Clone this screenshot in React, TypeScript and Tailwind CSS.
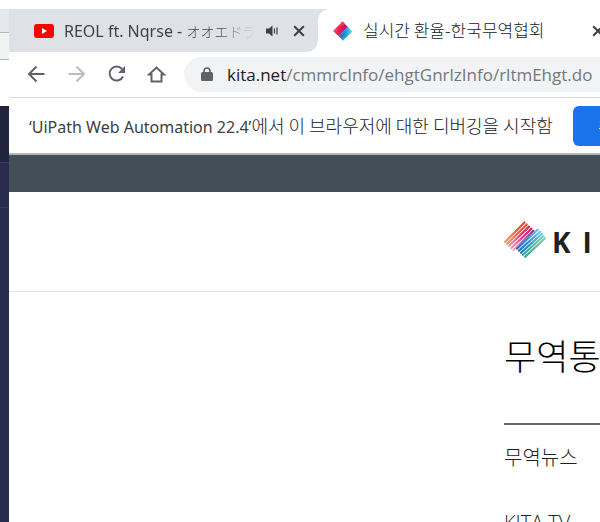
import React from "react";

const LATIN_FONT = "font-['Noto_Sans','Noto_Sans_CJK_KR',sans-serif]";
const KOREAN_FONT = "font-['Noto_Sans_CJK_KR',sans-serif]";

function CloseIcon() {
  return (
    <svg width="12" height="12" viewBox="0 0 12 12" fill="none" stroke="#3c4043" strokeWidth="2" aria-hidden="true">
      <path d="M1.200 1.200l9.600 9.600M10.800 1.200l-9.600 9.600" />
    </svg>
  );
}

function YouTubeIcon() {
  return (
    <svg width="20" height="14" viewBox="0 0 20 14" className="shrink-0" aria-hidden="true">
      <rect width="20" height="14" rx="3" fill="#f00" />
      <path d="M8 4l5 3-5 3z" fill="#fff" />
    </svg>
  );
}

function SpeakerIcon() {
  return (
    <svg width="13" height="12" viewBox="0 0 13 12" className="shrink-0" aria-hidden="true">
      <path d="M0 3.500h3L6.500 0.500v11L3 8.500H0z" fill="#3c4043" />
      <path d="M8.500 3.500v5M11 2.500v7" stroke="#3c4043" strokeWidth="1.200" />
    </svg>
  );
}

function KitaFavicon() {
  return (
    <svg width="20" height="20" viewBox="0 0 20 20" className="shrink-0" aria-hidden="true">
      <defs>
        <linearGradient id="favWarm" x1="0" y1="0" x2="1" y2="0.3">
          <stop offset="0" stopColor="#f07a80" />
          <stop offset="0.5" stopColor="#f51d55" />
          <stop offset="1" stopColor="#a5148f" />
        </linearGradient>
        <linearGradient id="favCool" x1="0" y1="0" x2="1" y2="0">
          <stop offset="0" stopColor="#3556bd" />
          <stop offset="0.5" stopColor="#129ed3" />
          <stop offset="1" stopColor="#76dce5" />
        </linearGradient>
      </defs>
      <path d="M0 10l9.500-9.500 5.500 5.500-9.500 9z" fill="url(#favWarm)" />
      <path d="M5.500 15L15 6l4.500 4.500L10 19.500z" fill="url(#favCool)" />
      <path d="M5 6L9.500.500 12 3z" fill="#f0452d" />
      <path d="M8 17.500L14 14l-4 5.500z" fill="#2bb5a8" />
    </svg>
  );
}

function KitaLogo() {
  return (
    <svg width="42" height="37" viewBox="0 0 42 37" fill="none" strokeWidth="2.200" strokeLinecap="round" className="shrink-0" aria-hidden="true">
      <defs>
        <linearGradient id="warm" gradientUnits="userSpaceOnUse" x1="0" y1="22" x2="22" y2="2">
          <stop offset="0" stopColor="#f5a66c" />
          <stop offset="0.6" stopColor="#ea5a3c" />
          <stop offset="1" stopColor="#e5482f" />
        </linearGradient>
        <linearGradient id="pink" gradientUnits="userSpaceOnUse" x1="3" y1="25" x2="28" y2="7">
          <stop offset="0" stopColor="#f6a4bd" />
          <stop offset="0.6" stopColor="#e3317a" />
          <stop offset="1" stopColor="#d41e5c" />
        </linearGradient>
        <linearGradient id="violet" gradientUnits="userSpaceOnUse" x1="8" y1="28" x2="30" y2="10">
          <stop offset="0" stopColor="#efa5cf" />
          <stop offset="1" stopColor="#922b90" />
        </linearGradient>
        <linearGradient id="blue" gradientUnits="userSpaceOnUse" x1="12" y1="28" x2="37" y2="10">
          <stop offset="0" stopColor="#2466b1" />
          <stop offset="0.5" stopColor="#2a97d8" />
          <stop offset="1" stopColor="#79cdf1" />
        </linearGradient>
        <linearGradient id="green" gradientUnits="userSpaceOnUse" x1="18" y1="35" x2="42" y2="16">
          <stop offset="0" stopColor="#20a58c" />
          <stop offset="1" stopColor="#82d4b5" />
        </linearGradient>
      </defs>
      <path d="M1 21L20.500 1.500M3 23L22.800 3.500" stroke="url(#warm)" />
      <path d="M5 25L25 5.600M7.300 27L27.500 7.700" stroke="url(#pink)" />
      <path d="M9.500 29L29.500 9.800" stroke="url(#violet)" />
      <path d="M13 27.500L34 8.500M15 29.600L36 10.700M17 31.700L38 12.800" stroke="url(#blue)" />
      <path d="M19 33.800L39.500 15M21.200 35.700L41 17.200" stroke="url(#green)" />
    </svg>
  );
}

function KitaWordmark() {
  return (
    <span className="flex gap-3 pt-1 font-['Open_Sans',sans-serif] text-[28px] leading-9 font-bold text-[#231f20]">
      <span>K</span>
      <span>I</span>
      <span>T</span>
      <span>A</span>
    </span>
  );
}

function TabStrip() {
  return (
    <div className={`flex h-[43px] bg-white ${LATIN_FONT}`}>
      <div className="flex w-[309px] shrink-0 items-center rounded-br-xl bg-[#dee1e6] pr-3 pl-[25px]">
        <YouTubeIcon />
        <span className="ml-[10px] w-[191px] overflow-hidden bg-linear-to-r from-[#3c4043] from-80% to-[#dee1e6] bg-clip-text text-base leading-6 whitespace-nowrap text-transparent">
          REOL ft. Nqrse - <span className="text-sm font-light">オオエドラ</span>
        </span>
        <span className="ml-[11px]">
          <SpeakerIcon />
        </span>
        <button aria-label="탭 닫기" className="ml-[14px]">
          <CloseIcon />
        </button>
      </div>
      <div className="flex min-w-0 flex-1 bg-[#dee1e6]">
        <div className="flex w-full items-center rounded-tl-xl bg-white pl-[15px]">
          <KitaFavicon />
          <span className={`ml-[10px] w-[229px] shrink-0 pb-[2px] text-[17px] leading-6 font-light whitespace-nowrap text-[#202124] ${KOREAN_FONT}`}>
            실시간 환율-한국무역협회
          </span>
          <button aria-label="탭 닫기" className="shrink-0">
            <CloseIcon />
          </button>
        </div>
      </div>
    </div>
  );
}

function Toolbar() {
  return (
    <div className="flex h-[46px] items-center border-b border-[#d5d7da] bg-white pl-[18px]">
      <div className="flex shrink-0 items-center gap-5">
        <button aria-label="뒤로" className="h-5 w-5">
          <svg width="20" height="20" viewBox="0 0 20 20" fill="none" stroke="#5f6368" strokeWidth="2">
            <path d="M17.500 9H3M9.500 1.500L2 9l7.500 7.500" />
          </svg>
        </button>
        <button aria-label="앞으로" className="h-5 w-5">
          <svg width="20" height="20" viewBox="0 0 20 20" fill="none" stroke="#babcbe" strokeWidth="2">
            <path d="M1.500 9H16M9.500 1.500L17 9l-7.500 7.500" />
          </svg>
        </button>
        <button aria-label="새로고침" className="h-5 w-5">
          <svg width="20" height="20" viewBox="0 0 20 20">
            <path d="M15 4A7 7 0 1 0 16 11.500" fill="none" stroke="#5f6368" strokeWidth="2" />
            <path d="M18 1v7h-7z" fill="#5f6368" />
          </svg>
        </button>
        <button aria-label="홈" className="h-5 w-5">
          <svg width="20" height="20" viewBox="0 0 20 20" fill="none" stroke="#5f6368" strokeWidth="2">
            <path d="M2 9.500H4.500V16.500H14.500V9.500H17L9.500 2.500Z" />
          </svg>
        </button>
      </div>
      <div className="ml-[17px] flex h-[35px] min-w-0 flex-1 items-center overflow-hidden rounded-l-full bg-[#f1f3f4] pl-[17px]">
        <svg width="12" height="15" viewBox="0 0 12 15" className="shrink-0" aria-hidden="true">
          <rect y="5" width="12" height="9" rx="1.500" fill="#5f6368" />
          <path d="M3 6V4a3 3 0 0 1 6 0v2" fill="none" stroke="#5f6368" strokeWidth="1.600" />
        </svg>
        <a href="#top" className="ml-[14px] font-['Open_Sans',sans-serif] text-[17px] leading-6 whitespace-nowrap text-[#74787c]">
          <span className="text-[#202124]">kita.net</span>/cmmrcInfo/ehgtGnrlzInfo/rltmEhgt.do
        </a>
      </div>
    </div>
  );
}

function DebugBar() {
  return (
    <div className="flex h-[57px] items-center overflow-hidden border-b-2 border-[#b5b7b8] bg-white pl-5">
      <p className={`w-[544px] shrink-0 text-base leading-6 whitespace-nowrap text-[#3c4043] ${LATIN_FONT}`}>
        ‘UiPath Web Automation 22.4’
        <span className={`text-lg leading-6 font-light text-[#202124] ${KOREAN_FONT}`}>에서 이 브라우저에 대한 디버깅을 시작함</span>
      </p>
      <button className={`h-10 w-20 shrink-0 rounded-md bg-[#1a73e8] text-base text-white ${KOREAN_FONT}`}>취소</button>
    </div>
  );
}

function Page() {
  return (
    <div id="top" className="min-h-0 flex-1 bg-white">
      <div className="h-[37px] bg-[#434f57]" />
      <header className="flex h-[100px] items-center gap-[6px] overflow-hidden border-b border-[#e5e5e5] pb-1 pl-[495px]">
        <KitaLogo />
        <KitaWordmark />
      </header>
      <nav className="ml-[495px] font-['Noto_Sans_CJK_KR',sans-serif] whitespace-nowrap">
        <h1 className="h-[133px] overflow-hidden border-b-2 border-[#666] pt-[38px] text-[35px] leading-[50px] font-light text-black">무역통상정보</h1>
        <ul className="text-xl font-light text-[#222]">
          <li className="pt-[14px]">
            <a href="#news" className="block leading-9">무역뉴스</a>
          </li>
          <li className="pt-[30px]">
            <a href="#tv" className="block font-['Open_Sans',sans-serif] leading-9">KITA TV</a>
          </li>
        </ul>
      </nav>
    </div>
  );
}

export default function App() {
  return (
    <div className="flex h-screen overflow-hidden bg-white">
      <div className="flex w-[9px] shrink-0 flex-col pt-[9px]">
        <div className="h-6 border-b border-[#b4b6b8] bg-[#e6e9ec]" />
        <div className="h-[27px] border-b border-[#b4b6b8] bg-[#f1f2f4]" />
        <div className="h-[46px] bg-white" />
        <div className="h-[57px] border-b border-[#343a68] bg-[#20243c]" />
        <div className="h-[45px] border-b border-[#343a68] bg-[#2a2c4f]" />
        <div className="flex-1 bg-[#2a2c4f]" />
      </div>
      <div className="flex min-w-0 flex-1 flex-col pt-[9px]">
        <TabStrip />
        <Toolbar />
        <DebugBar />
        <Page />
      </div>
    </div>
  );
}
